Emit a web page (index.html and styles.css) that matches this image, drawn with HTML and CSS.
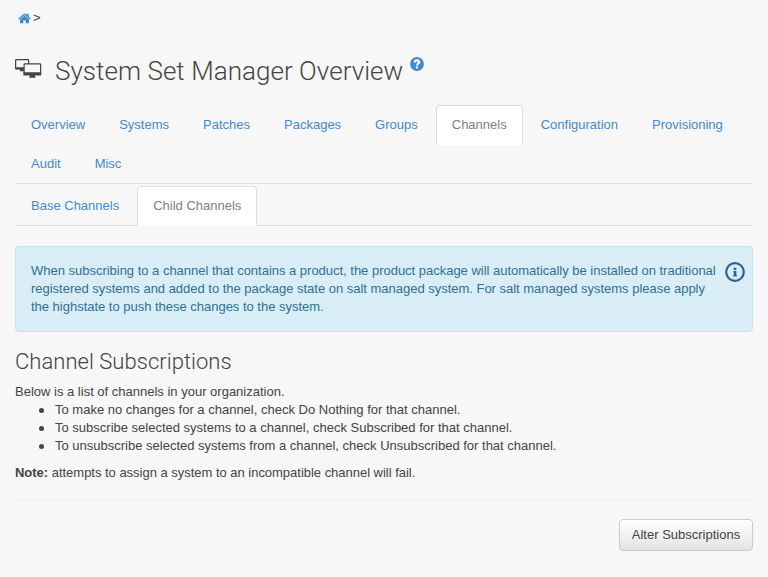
FILE: index.html
```html
<!DOCTYPE html>
<html lang="en">
<head>
<meta charset="utf-8">
<title>System Set Manager Overview</title>
<link rel="stylesheet" href="styles.css">
</head>
<body>
<nav class="breadcrumb"><a href="#" aria-label="Home"><svg class="home" viewBox="0 0 13 11"><path d="M6.500 .2 8.700 2V.7h2v3L12.800 5.400l-.8 1L6.500 1.900 1 6.400l-.8-1z"/><path d="M6.500 2.600 11 6.300V10.300H7.700V7.500H5.300v2.800H2V6.300z"/></svg></a><span>&gt;</span></nav>
<main>
<h1><svg class="computers" viewBox="0 0 27 20"><rect x=".6" y=".6" width="13" height="9" rx=".6" fill="none" stroke="#444" stroke-width="1.2"/><path d="M.3 8.200h9v2.300H.3zM5 10.500h4.200v1.800H4.800z" fill="#444"/><rect x="9.100" y="4.900" width="16.500" height="10.500" rx=".7" fill="#f7f7f7" stroke="#444" stroke-width="1.200"/><path d="M8.500 13.200h17.700v3.300H8.500zM15 16h4.600l1 2.800h-6.500z" fill="#444"/></svg><span class="title">System Set Manager Overview</span><svg class="help" viewBox="0 0 14 14"><circle cx="7" cy="7" r="6.900"/><path d="M4.700 5.400C4.900 2.700 9.300 2.800 9.200 5.100 9.100 6.700 7 6.600 7 8.400M7 9.500v2"/></svg></h1>
<ul class="tabs primary">
<li><a href="#">Overview</a></li><li><a href="#">Systems</a></li><li><a href="#">Patches</a></li><li><a href="#">Packages</a></li><li><a href="#">Groups</a></li><li class="active"><a href="#">Channels</a></li><li><a href="#">Configuration</a></li><li><a href="#">Provisioning</a></li><li><a href="#">Audit</a></li><li><a href="#">Misc</a></li>
</ul>
<ul class="tabs secondary">
<li><a href="#">Base Channels</a></li><li class="active"><a href="#">Child Channels</a></li>
</ul>
<div class="alert"><p>When subscribing to a channel that contains a product, the product package will automatically be installed on traditional<br>registered systems and added to the package state on salt managed system. For salt managed systems please apply<br>the highstate to push these changes to the system.</p><svg class="info" viewBox="0 0 20 20"><circle cx="10" cy="10" r="8.800"/><path d="M8.700 5.800h2.700v2.100H8.700zM8.300 8.900h3.100v4.300h.5v1.200H8.200v-1.200h.5V10h-.4z"/></svg></div>
<h2>Channel Subscriptions</h2>
<p class="intro">Below is a list of channels in your organization.</p>
<ul class="rules">
<li><span>To make no changes for a channel, check Do Nothing for that channel.</span></li>
<li><span>To subscribe selected systems to a channel, check Subscribed for that channel.</span></li>
<li><span>To unsubscribe selected systems from a channel, check Unsubscribed for that channel.</span></li>
</ul>
<p class="note"><strong>Note:</strong> attempts to assign a system to an incompatible channel will fail.</p>
<hr>
<div class="actions"><button type="button">Alter Subscriptions</button></div>
</main>
</body>
</html>
```
FILE: styles.css
```css
* { box-sizing: border-box; }
body { margin: 0; padding: 9px 15px 0; background: #f7f7f7; color: #444; font: 13px/18px "Liberation Sans", sans-serif; white-space: nowrap; }
a { color: #428bca; text-decoration: none; }
svg { display: block; flex: none; }
ul, p, h1, h2 { margin: 0; padding: 0; }
.breadcrumb { display: flex; align-items: center; gap: 2px; height: 18px; padding-left: 3px; }
.home { width: 13px; height: 11px; fill: #428bca; }
h1 { display: flex; align-items: center; height: 40px; margin-top: 24px; font: 300 26px/40px Roboto, sans-serif; letter-spacing: .04px; }
.computers { width: 27px; height: 20px; margin: -5px 13px 0 0; }
.help { width: 14px; height: 14px; margin: -14px 0 0 7px; fill: #428bca; }
.help path { fill: none; stroke: #fff; stroke-width: 2.1; }
.tabs { display: flex; flex-wrap: wrap; list-style: none; border-bottom: 1px solid #ddd; }
.primary { height: 79px; margin-top: 14px; }
.secondary { height: 40px; margin-top: 2px; }
.tabs li { height: 39px; margin-right: 2px; }
.tabs a { display: block; height: 40px; padding: 10px 15px; border: 1px solid transparent; border-radius: 4px 4px 0 0; }
.tabs .active a { background: #fff; border-color: #ddd #ddd transparent; color: #808080; }
.alert { display: flex; justify-content: space-between; height: 86px; margin-top: 20px; padding: 15px 7px 15px 15px; border: 1px solid #bce8f1; border-radius: 4px; background: #d9edf7; color: #31708f; letter-spacing: -.015px; }
.info { width: 20px; height: 20px; fill: #2a6496; }
.info circle { fill: none; stroke: #2a6496; stroke-width: 2.2; }
h2 { margin-top: 18px; font: 300 22px/24px Roboto, sans-serif; letter-spacing: .03px; }
.intro { margin-top: 9px; }
.rules { padding-left: 40px; }
.rules li { height: 18px; font-family: "Noto Sans", sans-serif; }
.rules span { display: inline-block; vertical-align: top; font-family: "Liberation Sans", sans-serif; }
.note { margin-top: 9px; letter-spacing: -.02px; }
hr { margin: 18px 0; border: 0; border-top: 1px solid #f0f0f0; }
.actions { display: flex; justify-content: flex-end; }
button { width: 134px; height: 32px; padding: 0; border: 1px solid #ccc; border-radius: 4px; background: linear-gradient(#fff, #e3e3e3); color: #444; font: inherit; }
```
